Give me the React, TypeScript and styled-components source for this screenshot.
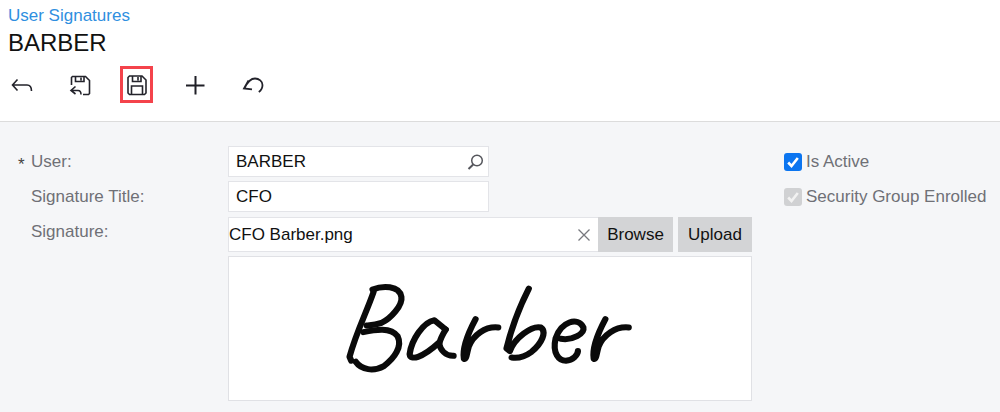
import React from "react";
import styled, { createGlobalStyle } from "styled-components";

const GlobalStyle = createGlobalStyle`
  html, body {
    margin: 0;
    padding: 0;
    background: #fff;
    font-family: "Liberation Sans", Arial, sans-serif;
    overflow: hidden;
  }
`;

const Page = styled.div`
  width: 1000px;
  height: 412px;
  display: flex;
  flex-direction: column;
  overflow: hidden;
`;

const Header = styled.header`
  height: 122px;
  box-sizing: border-box;
  padding: 6px 8px 0;
  background: #fff;
  border-bottom: 1px solid #dcdcdc;
  flex-shrink: 0;
`;

const Crumb = styled.a`
  display: block;
  font-size: 17px;
  line-height: 20px;
  color: #2f8fe0;
`;

const Title = styled.h1`
  margin: 3px 0 0;
  font-size: 24px;
  line-height: 28px;
  font-weight: 400;
  color: #111;
`;

const Toolbar = styled.div`
  display: flex;
  align-items: center;
  margin: 9px 0 0 -4px;
  height: 37px;
`;

const ToolButton = styled.button<{ $active?: boolean }>`
  width: 33px;
  height: 37px;
  margin-right: 25px;
  padding: 0;
  box-sizing: border-box;
  display: flex;
  align-items: center;
  justify-content: center;
  background: none;
  border: ${(p) => (p.$active ? "3px solid #f4434b" : "none")};
`;

const Body = styled.main`
  flex: 1;
  background: #f5f6f8;
  display: flex;
  padding: 24px 0 0;
`;

const Form = styled.div`
  width: 752px;
  display: grid;
  grid-template-columns: 228px 524px;
  grid-auto-rows: min-content;
`;

const Label = styled.label<{ $required?: boolean }>`
  position: relative;
  padding-left: 31px;
  font-size: 17px;
  line-height: 32px;
  color: #6f7076;

  &::before {
    content: ${(p) => (p.$required ? '"*"' : "none")};
    position: absolute;
    left: 18px;
    top: 3px;
    color: #444;
  }
`;

const Field = styled.div`
  width: 261px;
  height: 31px;
  margin-bottom: 4px;
  box-sizing: border-box;
  background: #fff;
  border: 1px solid #e3e4e8;
  display: flex;
  align-items: center;
  padding-left: 7px;
  font-size: 17px;
  color: #111;
`;

const FieldText = styled.span`
  flex: 1;
`;

const FieldIcon = styled.span`
  display: flex;
  margin-right: 4px;
`;

const UploadRow = styled.div`
  display: flex;
  height: 35px;
  margin: 1px 0 4px;
`;

const FileName = styled.div`
  flex: 1;
  box-sizing: border-box;
  background: #fff;
  border: 1px solid #e3e4e8;
  border-width: 1px 0 1px 1px;
  display: flex;
  align-items: center;
  font-size: 17px;
  color: #111;
`;

const ClearIcon = styled.span`
  display: flex;
  margin-right: 7px;
`;

const GreyButton = styled.button<{ $gap?: number }>`
  height: 35px;
  padding: 0;
  width: ${(p) => (p.$gap ? "75px" : "74px")};
  margin-right: ${(p) => p.$gap ?? 0}px;
  border: none;
  background: #d3d4d6;
  font-family: inherit;
  font-size: 17px;
  color: #111;
`;

const Preview = styled.div`
  grid-column: 2;
  height: 145px;
  box-sizing: border-box;
  background: #fff;
  border: 1px solid #e0e1e5;

  svg {
    display: block;
    width: 100%;
    height: 100%;
  }
`;

const Side = styled.div`
  margin-left: 32px;
  display: flex;
  flex-direction: column;
  gap: 15px;
`;

const CheckRow = styled.div<{ $disabled?: boolean }>`
  display: flex;
  align-items: center;
  height: 20px;
  margin-top: ${(p) => (p.$disabled ? 0 : 6)}px;
  font-size: 17px;
  color: #6f7076;
`;

const CheckBox = styled.span<{ $disabled?: boolean }>`
  width: 18px;
  height: 18px;
  margin-right: 4px;
  border-radius: 3px;
  background: ${(p) => (p.$disabled ? "#d0d1d3" : "#0b75f0")};
  display: flex;
  align-items: center;
  justify-content: center;
`;

const Tick = ({ color }: { color: string }) => (
  <svg width="14" height="14" viewBox="0 0 14 14" fill="none">
    <path d="M2.2 7.5 5.5 11 11.8 3" stroke={color} strokeWidth="2.6" />
  </svg>
);

const iconProps = {
  width: 24,
  height: 24,
  viewBox: "0 0 24 24",
  fill: "none",
  stroke: "#23232b",
  strokeWidth: 1.6,
};

const BackIcon = () => (
  <svg {...iconProps}>
    <path d="M8.5 6.5 3.5 12 8.5 17.5M3.5 12H18C21 12 22.5 14 22.5 18" />
  </svg>
);

const SaveBackIcon = () => (
  <svg {...iconProps}>
    <path d="M4.5 12V4.5L5.5 3.5H18.5L22.5 7.5V20.5L21.5 21.5H16" />
    <path d="M8.5 3.5V8.5H17V3.5M14 4.5V7.5" />
    <path d="M8.5 13.5 4 17.5 8.5 21M4 17.5H11C13 17.5 14 19 14 21.5" />
  </svg>
);

const SaveIcon = () => (
  <svg {...iconProps}>
    <path d="M4.5 3H17L21 7V20L19.5 21.5H4.5L3 20V4.5Z" />
    <path d="M7.5 3V8.5H16V3M13 4V7.5M6.5 21.5V13H17.5V21.5" />
  </svg>
);

const PlusIcon = () => (
  <svg width="24" height="24" viewBox="0 0 24 24" fill="none" stroke="#1f1f26" strokeWidth="2">
    <path d="M12.5 3V21.5M3 12.5H21.5" />
  </svg>
);

const UndoIcon = () => (
  <svg {...iconProps} strokeWidth={1.8}>
    <path d="M7.5 7.5 3 15.5 11 16.3M3.5 15C6 10 10 5.5 14 5.5C18 5.5 21.5 8.5 21.5 12C21.5 15 20 17.5 17.8 19" />
  </svg>
);

const SearchIcon = () => (
  <svg width="18" height="18" viewBox="0 0 18 18" fill="none" stroke="#55565c" strokeWidth="1.5">
    <circle cx="11" cy="7.5" r="5.3" />
    <path d="M7.2 11.5 2.5 16" strokeWidth="2" />
  </svg>
);

const ClearGlyph = () => (
  <svg width="14" height="14" viewBox="0 0 14 14" fill="none" stroke="#77787e" strokeWidth="1.3">
    <path d="M1.5 1.5 12.5 12.5M12.5 1.5 1.5 12.5" />
  </svg>
);

// hand written signature picture, traced from the uploaded image
const strokes = [
  "M442 118C470 106 520 104 526 140C530 165 495 205 468 218C450 224 435 225 425 226",
  "M445 125C425 185 395 245 375 320L380 332",
  "M415 246C450 238 495 230 515 258C530 290 505 325 475 348C445 365 410 360 393 335",
  "M655 238L622 210C590 215 555 270 550 312C552 332 585 325 635 278C640 300 655 318 678 317",
  "M655 238C645 255 640 265 637 278",
  "M742 207C725 240 702 290 708 326C716 330 716 310 722 290C735 255 770 228 808 232",
  "M897 115C870 170 845 240 832 295L842 303C855 265 905 225 932 232C950 245 935 280 905 305C885 320 865 325 847 322",
  "M990 266C1025 272 1060 250 1056 232C1040 198 990 215 975 265C965 310 985 332 1005 332C1025 330 1040 315 1040 303",
  "M1120 207C1103 240 1080 290 1086 326C1094 330 1094 310 1100 290C1113 255 1150 228 1188 232",
];

const Signature = () => (
  <svg viewBox="24 20 1520 430" preserveAspectRatio="none" fill="none" stroke="#0a0a0a" strokeWidth="18" strokeLinecap="round" strokeLinejoin="round">
    {strokes.map((d) => (
      <path key={d} d={d} />
    ))}
  </svg>
);

export default function App() {
  return (
    <Page>
      <GlobalStyle />
      <Header>
        <Crumb>User Signatures</Crumb>
        <Title>BARBER</Title>
        <Toolbar>
          <ToolButton><BackIcon /></ToolButton>
          <ToolButton><SaveBackIcon /></ToolButton>
          <ToolButton $active><SaveIcon /></ToolButton>
          <ToolButton><PlusIcon /></ToolButton>
          <ToolButton><UndoIcon /></ToolButton>
        </Toolbar>
      </Header>
      <Body>
        <Form>
          <Label $required>User:</Label>
          <Field>
            <FieldText>BARBER</FieldText>
            <FieldIcon><SearchIcon /></FieldIcon>
          </Field>
          <Label>Signature Title:</Label>
          <Field>
            <FieldText>CFO</FieldText>
          </Field>
          <Label>Signature:</Label>
          <UploadRow>
            <FileName>
              <FieldText>CFO Barber.png</FieldText>
              <ClearIcon><ClearGlyph /></ClearIcon>
            </FileName>
            <GreyButton $gap={5}>Browse</GreyButton>
            <GreyButton>Upload</GreyButton>
          </UploadRow>
          <Preview><Signature /></Preview>
        </Form>
        <Side>
          <CheckRow>
            <CheckBox><Tick color="#fff" /></CheckBox>
            Is Active
          </CheckRow>
          <CheckRow $disabled>
            <CheckBox $disabled><Tick color="#f2f2f2" /></CheckBox>
            Security Group Enrolled
          </CheckRow>
        </Side>
      </Body>
    </Page>
  );
}
